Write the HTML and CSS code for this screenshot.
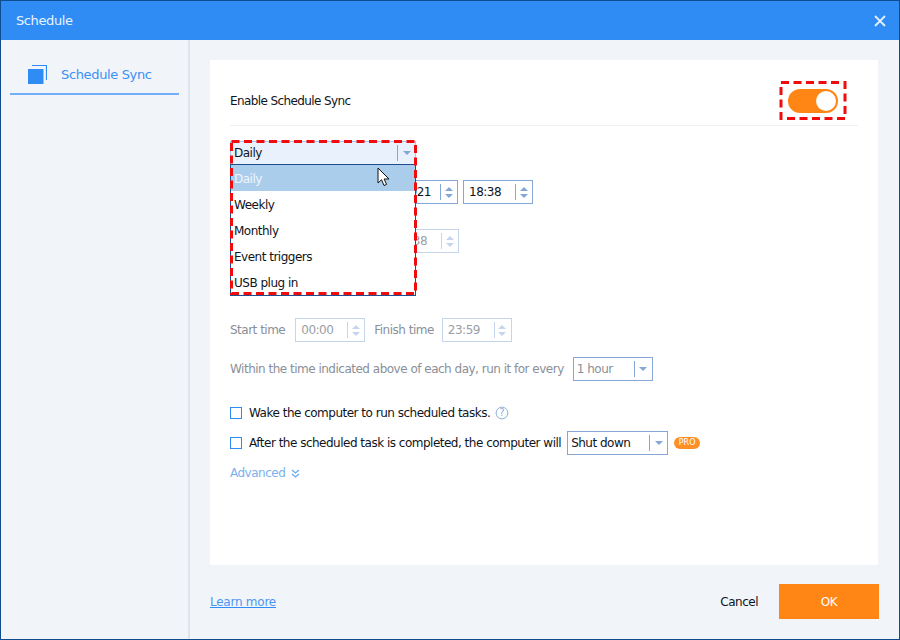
FILE: index.html
```html
<!DOCTYPE html>
<html lang="en">
<head>
<meta charset="utf-8">
<title>Schedule</title>
<link rel="stylesheet" href="styles.css">
</head>
<body>
<div class="window">
  <header class="titlebar">
    <span class="title">Schedule</span>
    <svg class="close" width="14" height="14" viewBox="0 0 14 14"><path d="M2 2l10 10M12 2L2 12" stroke="#e3eefc" stroke-width="1.800" fill="none"/></svg>
  </header>
  <div class="body">
    <aside class="sidebar">
      <div class="tab">
        <svg class="tab-icon" width="19" height="19" viewBox="0 0 19 19"><path d="M0 4h15.500v15H0z" fill="#2f8cf5"/><path d="M4 .500h14.500V15" fill="none" stroke="#2f8cf5" stroke-width="1.200"/></svg>
        <span class="tab-label">Schedule Sync</span>
      </div>
    </aside>
    <main class="content">
      <section class="panel">
        <div class="row-enable">
          <span class="enable-label">Enable Schedule Sync</span>
          <span class="toggle"><span class="knob"></span></span>
        </div>
        <div class="select select-type"><span class="select-value">Daily</span><span class="select-btn"><i class="caret"></i></span></div>
        <div class="row row-date">
          <span class="spin spin-date"><span class="spin-value">2/21/2021</span><span class="spin-btn"><i class="up"></i><i class="down"></i></span></span>
          <span class="spin spin-time"><span class="spin-value">18:38</span><span class="spin-btn"><i class="up"></i><i class="down"></i></span></span>
        </div>
        <div class="row row-every dim">
          <span class="spin spin-every"><span class="spin-value">18:38</span><span class="spin-btn"><i class="up"></i><i class="down"></i></span></span>
        </div>
        <div class="row row-range dim">
          <span>Start time</span>
          <span class="spin spin-short"><span class="spin-value">00:00</span><span class="spin-btn"><i class="up"></i><i class="down"></i></span></span>
          <span class="finish">Finish time</span>
          <span class="spin spin-short"><span class="spin-value">23:59</span><span class="spin-btn"><i class="up"></i><i class="down"></i></span></span>
        </div>
        <div class="row row-interval">
          <span class="dim">Within the time indicated above of each day, run it for every</span>
          <div class="select select-hour"><span class="select-value dim">1 hour</span><span class="select-btn"><i class="caret"></i></span></div>
        </div>
        <div class="row row-wake">
          <i class="check"></i>
          <span>Wake the computer to run scheduled tasks.</span>
          <svg class="help" width="14" height="14" viewBox="0 0 14 14"><circle cx="7" cy="7" r="5.900" fill="none" stroke="#8fb0d6"/><text x="7" y="10.300" text-anchor="middle" class="help-q">?</text></svg>
        </div>
        <div class="row row-after">
          <i class="check"></i>
          <span>After the scheduled task is completed, the computer will</span>
          <div class="select select-down"><span class="select-value">Shut down</span><span class="select-btn"><i class="caret"></i></span></div>
          <span class="pro">PRO</span>
        </div>
        <div class="row row-advanced">
          <span>Advanced</span>
          <svg width="9" height="9" viewBox="0 0 9 9"><path d="M1 1l3.500 3L8 1M1 5l3.500 3L8 5" fill="none" stroke="#6aa6f2" stroke-width="1.200"/></svg>
        </div>
        <ul class="dropdown">
          <li class="active">Daily</li>
          <li>Weekly</li>
          <li>Monthly</li>
          <li>Event triggers</li>
          <li>USB plug in</li>
        </ul>
      </section>
      <footer class="footer">
        <a class="learn" href="#">Learn more</a>
        <span class="cancel">Cancel</span>
        <button class="ok" type="button">OK</button>
      </footer>
    </main>
  </div>
  <svg class="mark" width="898" height="638" viewBox="0 0 898 638">
    <rect class="mark-rect" x="780" y="81.500" width="64" height="36"/>
    <rect class="mark-rect" x="230.500" y="140.500" width="184" height="152"/>
  </svg>
  <svg class="cursor" width="14" height="21" viewBox="0 0 14 21"><path d="M1 1v15l3.500-3.300L7 18.500l2.600-1.100-2.500-5.400h4.900z" fill="#fff" stroke="#111" stroke-width="1"/></svg>
</div>
</body>
</html>
```

FILE: styles.css
```css
* { box-sizing: border-box; }
html, body { margin: 0; padding: 0; }
body {
  width: 900px;
  height: 640px;
  overflow: hidden;
  font: 12px/16px "DejaVu Sans", sans-serif;
  letter-spacing: -0.5px;
  color: #10141c;
  background: #fff;
}
.window {
  position: relative;
  width: 900px;
  height: 640px;
  display: flex;
  flex-direction: column;
  border: 1px solid #0f4c8f;
  background: #f1f5fa;
}
.titlebar {
  height: 39px;
  flex: none;
  display: flex;
  align-items: center;
  justify-content: space-between;
  padding: 0 12px 0 15px;
  background: #2f8cf5;
  color: #eaf3fe;
}
.title { font-size: 13px; letter-spacing: -0.4px; }
.close { display: block; }
.body { flex: 1; display: flex; min-height: 0; }
.sidebar {
  width: 189px;
  flex: none;
  padding: 20px 9px 0;
  border-right: 2px solid #dfe4ea;
}
.tab {
  height: 35px;
  display: flex;
  align-items: center;
  gap: 14px;
  padding: 0 0 5px 18px;
  border-bottom: 2px solid #74aef8;
  color: #3c90f5;
  font-size: 13px;
  letter-spacing: -0.35px;
}
.tab-icon { display: block; }
.tab-label { padding-top: 2px; }
.content {
  flex: 1;
  min-width: 0;
  display: flex;
  flex-direction: column;
  padding: 20px 21px 0 20px;
}
.panel {
  position: relative;
  height: 505px;
  flex: none;
  padding: 0 20px;
  background: #fff;
}
.row-enable {
  height: 66px;
  padding-top: 18px;
  display: flex;
  align-items: center;
  justify-content: space-between;
  border-bottom: 1px solid #eef0f3;
}
.enable-label { letter-spacing: -0.6px; margin-top: -2px; }
.toggle {
  position: relative;
  width: 50px;
  height: 24px;
  border-radius: 12px;
  background: #ff8615;
  margin-right: 20px;
  margin-top: -1px;
}
.knob {
  position: absolute;
  right: 2px;
  top: 2px;
  width: 20px;
  height: 20px;
  border-radius: 50%;
  background: #fff;
}
.dim { color: #8a8f98; }
.row { display: flex; align-items: center; }
.select {
  display: flex;
  align-items: center;
  height: 24px;
  border: 1px solid #86a6d6;
  background: #fff;
}
.select-value { flex: 1; padding-left: 3px; white-space: nowrap; }
.select-btn {
  width: 18px;
  height: 16px;
  border-left: 1px solid #86a6d6;
  display: flex;
  align-items: center;
  justify-content: center;
  flex: none;
}
.caret {
  width: 0;
  height: 0;
  border-left: 4px solid transparent;
  border-right: 4px solid transparent;
  border-top: 4px solid #86a6d6;
}
.select-type {
  position: absolute;
  left: 20px;
  top: 81px;
  width: 186px;
  background: #e8f1fc;
  border-color: #a9c6ea;
}
.spin {
  display: flex;
  align-items: center;
  height: 24px;
  border: 1px solid #86a6d6;
  background: #fff;
  flex: none;
}
.spin-value { flex: 1; padding-left: 5px; white-space: nowrap; }
.spin-btn {
  width: 16px;
  height: 16px;
  flex: none;
  border-left: 1px solid #86a6d6;
  display: flex;
  flex-direction: column;
  align-items: center;
  justify-content: center;
  gap: 3px;
  margin-right: 1px;
}
.up, .down {
  width: 0;
  height: 0;
  border-left: 4px solid transparent;
  border-right: 4px solid transparent;
}
.up { border-bottom: 4px solid #86a6d6; }
.down { border-top: 4px solid #86a6d6; }
.dim .spin, .dim.spin { border-color: #c5d5ec; color: #9a9ea6; }
.dim .spin-btn { border-color: #c5d5ec; }
.dim .up { border-bottom-color: #c5d5ec; }
.dim .down { border-top-color: #c5d5ec; }
.row-date { margin-top: 54px; padding-left: 118px; gap: 5px; }
.spin-date { width: 110px; }
.spin-date .spin-value { text-align: right; padding-right: 9px; }
.spin-time { width: 70px; }
.row-every { margin-top: 25px; padding-left: 159px; }
.spin-every { width: 70px; }
.spin-every .spin-value { text-align: right; padding-right: 14px; }
.row-range { margin-top: 65px; }
.spin-short { width: 70px; margin-left: 10px; }
.finish { margin-left: 9px; margin-right: -2px; }
.row-interval { margin-top: 15px; height: 24px; }
.select-hour { width: 80px; margin-left: 9px; border-color: #86a6d6; }
.row-wake { margin-top: 20px; height: 24px; }
.row-after { margin-top: 6px; height: 24px; }
.check {
  width: 12px;
  height: 12px;
  border: 1px solid #2f8cf5;
  margin-right: 7px;
  flex: none;
  background: #fff;
}
.help { margin-left: 5px; }
.help-q { font-size: 10px; fill: #8fb0d6; letter-spacing: 0; }
.select-down { width: 101px; margin-left: 6px; }
.pro {
  margin-left: 6px;
  width: 26px;
  height: 12px;
  border-radius: 6px;
  background: #ff8f26;
  color: #fff;
  font-size: 8px;
  line-height: 12px;
  text-align: center;
  letter-spacing: 0;
}
.row-advanced { margin-top: 6px; height: 24px; color: #7bb0f0; gap: 6px; }
.dropdown {
  position: absolute;
  left: 20px;
  top: 104px;
  width: 186px;
  height: 132px;
  margin: 0;
  padding: 0;
  list-style: none;
  background: #fff;
  border: 1px solid #1d4f8f;
}
.dropdown li { height: 26px; line-height: 28px; padding-left: 3px; }
.dropdown .active { background: #abcdec; color: #eef6fd; }
.footer {
  flex: 1;
  display: flex;
  align-items: center;
  padding-bottom: 1px;
}
.learn { color: #4c96f2; text-decoration-color: #2f8cf5; letter-spacing: -0.25px; }
.cancel { margin-left: auto; margin-right: 21px; }
.ok {
  width: 100px;
  height: 35px;
  margin-right: -1px;
  border: 0;
  padding: 0;
  background: #ff8615;
  color: #fff;
  font: inherit;
  letter-spacing: inherit;
}
.mark { position: absolute; left: 0; top: 0; pointer-events: none; }
.mark-rect { fill: none; stroke: #f00c0c; stroke-width: 3; stroke-dasharray: 8 4.500; }
.cursor { position: absolute; left: 376px; top: 166px; }
```
